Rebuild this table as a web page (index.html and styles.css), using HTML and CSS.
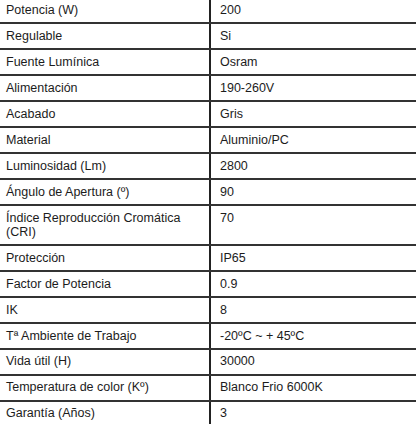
FILE: index.html
```html
<!DOCTYPE html>
<html lang="es">
<head>
<meta charset="utf-8">
<title>Especificaciones</title>
<link rel="stylesheet" href="styles.css">
</head>
<body>
<table class="specs">
  <tbody>
    <tr><td class="k">Potencia (W)</td><td class="v">200</td></tr>
    <tr><td class="k">Regulable</td><td class="v">Si</td></tr>
    <tr><td class="k">Fuente Lumínica</td><td class="v">Osram</td></tr>
    <tr><td class="k">Alimentación</td><td class="v">190-260V</td></tr>
    <tr><td class="k">Acabado</td><td class="v">Gris</td></tr>
    <tr><td class="k">Material</td><td class="v">Aluminio/PC</td></tr>
    <tr><td class="k">Luminosidad (Lm)</td><td class="v">2800</td></tr>
    <tr><td class="k">Ángulo de Apertura (º)</td><td class="v">90</td></tr>
    <tr><td class="k">Índice Reproducción Cromática (CRI)</td><td class="v">70</td></tr>
    <tr><td class="k">Protección</td><td class="v">IP65</td></tr>
    <tr><td class="k">Factor de Potencia</td><td class="v">0.9</td></tr>
    <tr><td class="k">IK</td><td class="v">8</td></tr>
    <tr><td class="k">Tª Ambiente de Trabajo</td><td class="v">-20ºC ~ + 45ºC</td></tr>
    <tr><td class="k">Vida útil (H)</td><td class="v">30000</td></tr>
    <tr><td class="k">Temperatura de color (Kº)</td><td class="v">Blanco Frio 6000K</td></tr>
    <tr><td class="k">Garantía (Años)</td><td class="v">3</td></tr>
  </tbody>
</table>
</body>
</html>
```
FILE: styles.css
```css
html, body {
  margin: 0;
  padding: 0;
  background: #ffffff;
}
body {
  font-family: "Liberation Sans", Arial, Helvetica, sans-serif;
  font-size: 12.5px;
  color: #1c1c1c;
  overflow: hidden;
}
.specs {
  width: 100%;
  border-collapse: collapse;
  table-layout: fixed;
  margin-top: -1.5px;
}
.specs td {
  padding: 4.75px 7px 4.75px 6px;
  line-height: 14.4px;
  vertical-align: top;
  border-bottom: 2px solid #333333;
  text-align: left;
}
.specs td.k {
  width: 196px;
  border-right: 2px solid #222222;
}
.specs td.v {
  padding-left: 9px;
}
```
